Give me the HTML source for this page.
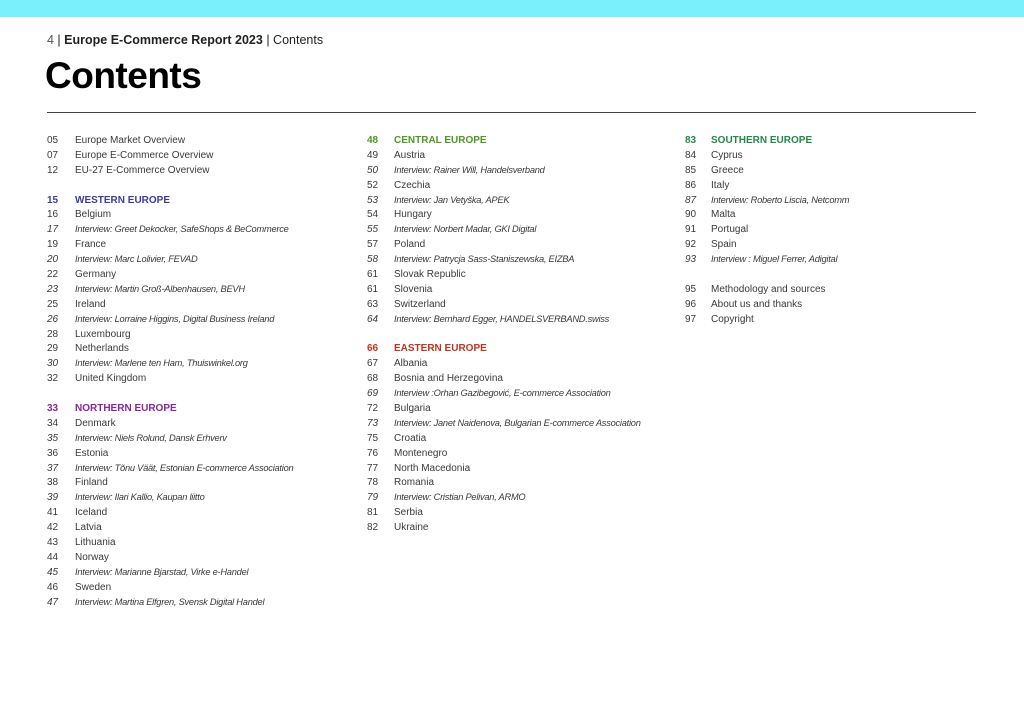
<!DOCTYPE html>
<html><head><meta charset="utf-8"><style>
*{margin:0;padding:0;box-sizing:border-box}
body{width:1024px;height:724px;background:#fff;position:relative;overflow:hidden;font-family:"Liberation Sans",sans-serif;color:#333}
.bar{position:absolute;left:0;top:0;width:1024px;height:17px;background:#7af0fc}
.hdr{position:absolute;left:47px;top:33px;font-size:12.5px;color:#222;white-space:nowrap}
.hdr .n{color:#555}
.title{position:absolute;left:45px;top:55px;font-size:37px;font-weight:bold;color:#000;letter-spacing:-0.5px}
.rule{position:absolute;left:47px;top:112px;width:929px;height:1px;background:#444}
.col{position:absolute;top:136px}
.r{height:14.9px;white-space:nowrap;position:relative;color:#3a3a3a}
.r span{position:absolute;top:0;display:block;line-height:10px;font-size:10px}
.r .p{left:0}
.r .t{left:28px}
.r.i span{font-style:italic}
.r.i .t{font-size:9.3px;letter-spacing:-0.25px;top:-1px}
.r.h span{font-weight:bold}
.w{color:#3b3ba6}.no{color:#8b23a3}.c{color:#4c9a22}.e{color:#c5321d}.s{color:#1f8a4c}
</style></head><body>
<div class="bar"></div>
<div class="hdr"><span class="n">4</span> | <b>Europe E-Commerce Report 2023</b> | Contents</div>
<div class="title">Contents</div>
<div class="rule"></div>

<div class="col" style="left:47px">
<div class="r"><span class="p">05</span><span class="t">Europe Market Overview</span></div>
<div class="r"><span class="p">07</span><span class="t">Europe E-Commerce Overview</span></div>
<div class="r"><span class="p">12</span><span class="t">EU-27 E-Commerce Overview</span></div>
<div class="r"></div>
<div class="r h w"><span class="p">15</span><span class="t">WESTERN EUROPE</span></div>
<div class="r"><span class="p">16</span><span class="t">Belgium</span></div>
<div class="r i"><span class="p">17</span><span class="t">Interview: Greet Dekocker, SafeShops &amp; BeCommerce</span></div>
<div class="r"><span class="p">19</span><span class="t">France</span></div>
<div class="r i"><span class="p">20</span><span class="t">Interview: Marc Lolivier, FEVAD</span></div>
<div class="r"><span class="p">22</span><span class="t">Germany</span></div>
<div class="r i"><span class="p">23</span><span class="t">Interview: Martin Groß-Albenhausen, BEVH</span></div>
<div class="r"><span class="p">25</span><span class="t">Ireland</span></div>
<div class="r i"><span class="p">26</span><span class="t">Interview: Lorraine Higgins, Digital Business Ireland</span></div>
<div class="r"><span class="p">28</span><span class="t">Luxembourg</span></div>
<div class="r"><span class="p">29</span><span class="t">Netherlands</span></div>
<div class="r i"><span class="p">30</span><span class="t">Interview: Marlene ten Ham, Thuiswinkel.org</span></div>
<div class="r"><span class="p">32</span><span class="t">United Kingdom</span></div>
<div class="r"></div>
<div class="r h no"><span class="p">33</span><span class="t">NORTHERN EUROPE</span></div>
<div class="r"><span class="p">34</span><span class="t">Denmark</span></div>
<div class="r i"><span class="p">35</span><span class="t">Interview: Niels Rolund, Dansk Erhverv</span></div>
<div class="r"><span class="p">36</span><span class="t">Estonia</span></div>
<div class="r i"><span class="p">37</span><span class="t">Interview: Tõnu Väät, Estonian E-commerce Association</span></div>
<div class="r"><span class="p">38</span><span class="t">Finland</span></div>
<div class="r i"><span class="p">39</span><span class="t">Interview: Ilari Kallio, Kaupan liitto</span></div>
<div class="r"><span class="p">41</span><span class="t">Iceland</span></div>
<div class="r"><span class="p">42</span><span class="t">Latvia</span></div>
<div class="r"><span class="p">43</span><span class="t">Lithuania</span></div>
<div class="r"><span class="p">44</span><span class="t">Norway</span></div>
<div class="r i"><span class="p">45</span><span class="t">Interview: Marianne Bjarstad, Virke e-Handel</span></div>
<div class="r"><span class="p">46</span><span class="t">Sweden</span></div>
<div class="r i"><span class="p">47</span><span class="t">Interview: Martina Elfgren, Svensk Digital Handel</span></div>
</div>

<div class="col" style="left:367px">
<div class="r h c"><span class="p">48</span><span class="t" style="left:27px">CENTRAL EUROPE</span></div>
<div class="r"><span class="p">49</span><span class="t" style="left:27px">Austria</span></div>
<div class="r i"><span class="p">50</span><span class="t" style="left:27px">Interview: Rainer Will, Handelsverband</span></div>
<div class="r"><span class="p">52</span><span class="t" style="left:27px">Czechia</span></div>
<div class="r i"><span class="p">53</span><span class="t" style="left:27px">Interview: Jan Vetyška, APEK</span></div>
<div class="r"><span class="p">54</span><span class="t" style="left:27px">Hungary</span></div>
<div class="r i"><span class="p">55</span><span class="t" style="left:27px">Interview: Norbert Madar, GKI Digital</span></div>
<div class="r"><span class="p">57</span><span class="t" style="left:27px">Poland</span></div>
<div class="r i"><span class="p">58</span><span class="t" style="left:27px">Interview: Patrycja Sass-Staniszewska, EIZBA</span></div>
<div class="r"><span class="p">61</span><span class="t" style="left:27px">Slovak Republic</span></div>
<div class="r"><span class="p">61</span><span class="t" style="left:27px">Slovenia</span></div>
<div class="r"><span class="p">63</span><span class="t" style="left:27px">Switzerland</span></div>
<div class="r i"><span class="p">64</span><span class="t" style="left:27px">Interview: Bernhard Egger, HANDELSVERBAND.swiss</span></div>
<div class="r"></div>
<div class="r h e"><span class="p">66</span><span class="t" style="left:27px">EASTERN EUROPE</span></div>
<div class="r"><span class="p">67</span><span class="t" style="left:27px">Albania</span></div>
<div class="r"><span class="p">68</span><span class="t" style="left:27px">Bosnia and Herzegovina</span></div>
<div class="r i"><span class="p">69</span><span class="t" style="left:27px">Interview :Orhan Gazibegović, E-commerce Association</span></div>
<div class="r"><span class="p">72</span><span class="t" style="left:27px">Bulgaria</span></div>
<div class="r i"><span class="p">73</span><span class="t" style="left:27px">Interview: Janet Naidenova, Bulgarian E-commerce Association</span></div>
<div class="r"><span class="p">75</span><span class="t" style="left:27px">Croatia</span></div>
<div class="r"><span class="p">76</span><span class="t" style="left:27px">Montenegro</span></div>
<div class="r"><span class="p">77</span><span class="t" style="left:27px">North Macedonia</span></div>
<div class="r"><span class="p">78</span><span class="t" style="left:27px">Romania</span></div>
<div class="r i"><span class="p">79</span><span class="t" style="left:27px">Interview: Cristian Pelivan, ARMO</span></div>
<div class="r"><span class="p">81</span><span class="t" style="left:27px">Serbia</span></div>
<div class="r"><span class="p">82</span><span class="t" style="left:27px">Ukraine</span></div>
</div>

<div class="col" style="left:685px">
<div class="r h s"><span class="p">83</span><span class="t" style="left:26px">SOUTHERN EUROPE</span></div>
<div class="r"><span class="p">84</span><span class="t" style="left:26px">Cyprus</span></div>
<div class="r"><span class="p">85</span><span class="t" style="left:26px">Greece</span></div>
<div class="r"><span class="p">86</span><span class="t" style="left:26px">Italy</span></div>
<div class="r i"><span class="p">87</span><span class="t" style="left:26px">Interview: Roberto Liscia, Netcomm</span></div>
<div class="r"><span class="p">90</span><span class="t" style="left:26px">Malta</span></div>
<div class="r"><span class="p">91</span><span class="t" style="left:26px">Portugal</span></div>
<div class="r"><span class="p">92</span><span class="t" style="left:26px">Spain</span></div>
<div class="r i"><span class="p">93</span><span class="t" style="left:26px">Interview : Miguel Ferrer, Adigital</span></div>
<div class="r"></div>
<div class="r"><span class="p">95</span><span class="t" style="left:26px">Methodology and sources</span></div>
<div class="r"><span class="p">96</span><span class="t" style="left:26px">About us and thanks</span></div>
<div class="r"><span class="p">97</span><span class="t" style="left:26px">Copyright</span></div>
</div>
</body></html>
